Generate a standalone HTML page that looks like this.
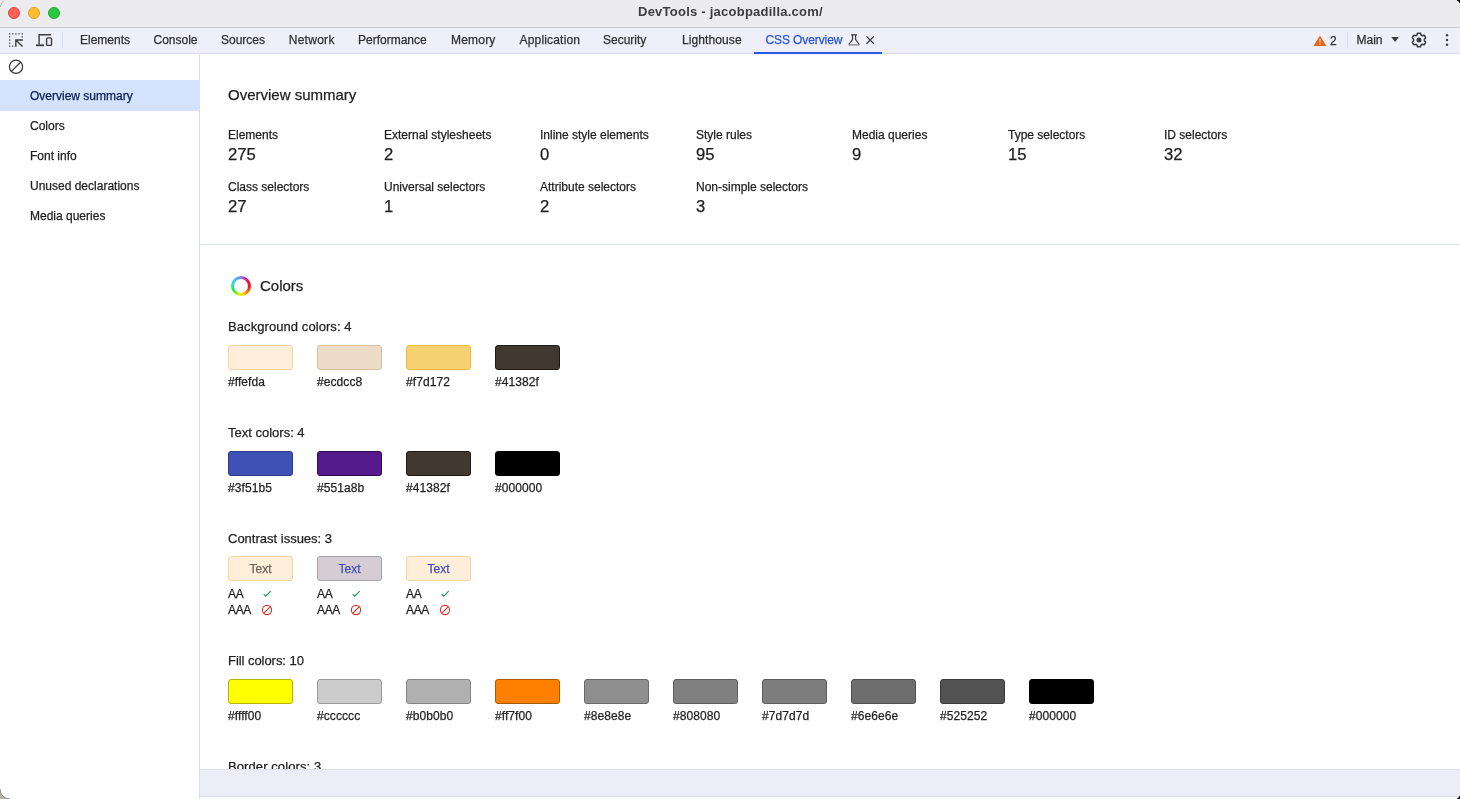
<!DOCTYPE html>
<html><head><meta charset="utf-8">
<style>
*{box-sizing:border-box;margin:0;padding:0}
html,body{width:1460px;height:799px;overflow:hidden;background:#fff}
body{font-family:"Liberation Sans",sans-serif;font-size:12px;color:#1f1f1f;position:relative;-webkit-text-stroke:.25px currentColor}
.abs{position:absolute}
#titlebar{left:0;top:0;width:1460px;height:27px;background:#ececee}
#titleline{left:0;top:27px;width:1460px;height:1px;background:#c9c9cc}
.tl{position:absolute;top:7px;width:12px;height:12px;border-radius:50%}
#title{-webkit-text-stroke:0;left:638px;top:4px;line-height:16px;font-weight:bold;font-size:13px;color:#3d3d3f;letter-spacing:.24px;white-space:nowrap}
#tabbar{left:0;top:28px;width:1460px;height:25px;background:#eeeff8}
#tabline{left:0;top:53px;width:1460px;height:1px;background:#d9dcf5}
.tab{position:absolute;top:33px;font-size:12px;color:#303034;white-space:nowrap;line-height:14px}
#sidebar{left:0;top:54px;width:199px;height:745px;background:#fff}
#sideline{left:199px;top:54px;width:1px;height:745px;background:#dcdcf4}
.sitem{position:absolute;left:30px;font-size:12px;line-height:14px;white-space:nowrap;color:#1f1f1f}
#sel{left:0;top:80px;width:200px;height:31px;background:#d3e3fd}
.h{position:absolute;left:228px;font-size:15px;line-height:18px;color:#1f1f1f;white-space:nowrap}
.lbl{position:absolute;font-size:12px;line-height:14px;white-space:nowrap}
.num{position:absolute;font-size:16px;line-height:18px;white-space:nowrap;transform:scaleX(1.04);transform-origin:0 0}
.sub{position:absolute;left:228px;font-size:13px;line-height:15px;white-space:nowrap;margin-top:-1px}
.sw{position:absolute;width:65px;height:25px;border-radius:3px;border:1px solid #000}
.hex{position:absolute;font-size:12px;line-height:14px;white-space:nowrap;letter-spacing:.08px}
#hr1{left:200px;top:244px;width:1260px;height:1px;background:#dfe4f3}
#bot{left:200px;top:769px;width:1260px;height:28px;background:#ededf7;border-top:1px solid #dcdff0;border-bottom:1px solid #dcdff0}
</style></head><body><div id="root" style="position:absolute;left:0;top:0;width:1460px;height:799px;will-change:transform">
<div class="abs" id="titlebar"></div>
<div class="abs" id="titleline"></div>
<div class="tl" style="left:8px;background:#fe5f57;border:0.5px solid #e14640"></div>
<div class="tl" style="left:28px;background:#febc2e;border:0.5px solid #dfa023"></div>
<div class="tl" style="left:48px;background:#28c840;border:0.5px solid #1dad2b"></div>
<div class="abs" id="title">DevTools - jacobpadilla.com/</div>
<div class="abs" id="tabbar"></div>
<div class="abs" id="tabline"></div>

<div class="tab" style="left:80px">Elements</div>
<div class="tab" style="left:153.5px">Console</div>
<div class="tab" style="left:221px">Sources</div>
<div class="tab" style="left:288.7px;letter-spacing:.28px">Network</div>
<div class="tab" style="left:358px">Performance</div>
<div class="tab" style="left:451px;letter-spacing:.2px">Memory</div>
<div class="tab" style="left:519.5px;letter-spacing:.18px">Application</div>
<div class="tab" style="left:603px">Security</div>
<div class="tab" style="left:682px;letter-spacing:.1px">Lighthouse</div>
<div class="tab" style="left:765.5px;color:#2a57d4;letter-spacing:-.1px">CSS Overview</div>
<div class="abs" style="left:754px;top:52px;width:128px;height:2px;background:#2b59e6;z-index:2"></div>
<div class="tab" style="left:1330px;top:33.7px">2</div>
<div class="tab" style="left:1356.5px">Main</div>

<div class="abs" id="sidebar"></div>

<svg class="abs" style="left:0;top:28px" width="1460" height="50" viewBox="0 28 1460 50">
<g fill="#3b3b40">
<!-- inspect dots -->
<rect x="9" y="33.2" width="1.3" height="1.3"/><rect x="12.1" y="33.2" width="1.3" height="1.3"/><rect x="15.2" y="33.2" width="1.3" height="1.3"/><rect x="18.4" y="33.2" width="1.3" height="1.3"/><rect x="21.6" y="33.2" width="1.3" height="1.3"/>
<rect x="9" y="36.2" width="1.3" height="1.3"/><rect x="9" y="39.4" width="1.3" height="1.3"/><rect x="9" y="42.5" width="1.3" height="1.3"/><rect x="9" y="45.5" width="1.3" height="1.3"/>
<rect x="21.6" y="36.2" width="1.3" height="1.3"/><rect x="12.1" y="45.5" width="1.3" height="1.3"/>
</g>
<g fill="none" stroke="#3b3b40" stroke-width="1.4">
<path d="M22.9 40 H15.8 V46.8 M16 40.2 L22.6 46.6"/>
<!-- device -->
<path d="M51 34.8 H39.1 V44.6" />
<path d="M36 45.3 H44" stroke-width="1.8"/>
<rect x="46.6" y="37.9" width="4.9" height="7.5" rx="1" />
<!-- clear -->
<circle cx="16" cy="66.8" r="6.6" stroke-width="1.3"/><path d="M11.4 71.4 L20.6 62.2" stroke-width="1.3"/>
<!-- flask -->
<path d="M851.1 34.9 H857 M852.5 35 V39.6 L848.8 44.5 M855.6 35 V39.6 L859.3 44.5" stroke-width="1.2"/>
<path d="M848.6 44.9 H859.5" stroke-width="1.2" stroke="#77777c"/>
<!-- x -->
<path d="M866.5 36.4 L873.8 43.7 M873.8 36.4 L866.5 43.7" stroke-width="1.3"/>
<!-- gear -->
<path d="M1421.02 34.99 L1420.57 33.18 L1417.43 33.18 L1416.98 34.99 L1415.68 35.74 L1413.88 35.23 L1412.31 37.95 L1413.65 39.25 L1413.65 40.75 L1412.31 42.05 L1413.88 44.77 L1415.68 44.26 L1416.98 45.01 L1417.43 46.82 L1420.57 46.82 L1421.02 45.01 L1422.32 44.26 L1424.12 44.77 L1425.69 42.05 L1424.35 40.75 L1424.35 39.25 L1425.69 37.95 L1424.12 35.23 L1422.32 35.74Z" stroke-width="1.5" stroke-linejoin="round"/>
</g>
<circle cx="1419" cy="40" r="2.5" fill="#3b3b40"/>
<circle cx="1447" cy="35.3" r="1.2" fill="#3b3b40"/><circle cx="1447" cy="40" r="1.2" fill="#3b3b40"/><circle cx="1447" cy="44.7" r="1.2" fill="#3b3b40"/>
<path d="M1391.3 36.9 H1398.8 L1395.05 42.1 Z" fill="#3b3b40"/>
<path d="M1319.9 35.6 L1326.3 46 H1313.6 Z" fill="#e8631e"/>
<rect x="1319.3" y="38.6" width="1.3" height="4" fill="#ffc49a"/><rect x="1319.3" y="43.4" width="1.3" height="1.3" fill="#ffc49a"/>
<rect x="62" y="32" width="1" height="16" fill="#d6ddf3"/>
<rect x="1347" y="32" width="1" height="16" fill="#d6ddf3"/>
</svg>

<div class="abs" id="sideline"></div>
<div class="abs" id="sel"></div>
<div class="sitem" style="top:89px;color:#0b1e52">Overview summary</div>
<div class="sitem" style="top:119px">Colors</div>
<div class="sitem" style="top:149px">Font info</div>
<div class="sitem" style="top:179px">Unused declarations</div>
<div class="sitem" style="top:209px">Media queries</div>

<div class="h" style="top:86px">Overview summary</div>
<div class="abs" id="hr1"></div>
<div class="lbl" style="left:228px;top:128px">Elements</div><div class="num" style="left:228px;top:145.5px">275</div>
<div class="lbl" style="left:384px;top:128px">External stylesheets</div><div class="num" style="left:384px;top:145.5px">2</div>
<div class="lbl" style="left:540px;top:128px">Inline style elements</div><div class="num" style="left:540px;top:145.5px">0</div>
<div class="lbl" style="left:696px;top:128px">Style rules</div><div class="num" style="left:696px;top:145.5px">95</div>
<div class="lbl" style="left:852px;top:128px">Media queries</div><div class="num" style="left:852px;top:145.5px">9</div>
<div class="lbl" style="left:1008px;top:128px">Type selectors</div><div class="num" style="left:1008px;top:145.5px">15</div>
<div class="lbl" style="left:1164px;top:128px">ID selectors</div><div class="num" style="left:1164px;top:145.5px">32</div>
<div class="lbl" style="left:228px;top:180px">Class selectors</div><div class="num" style="left:228px;top:197.5px">27</div>
<div class="lbl" style="left:384px;top:180px">Universal selectors</div><div class="num" style="left:384px;top:197.5px">1</div>
<div class="lbl" style="left:540px;top:180px">Attribute selectors</div><div class="num" style="left:540px;top:197.5px">2</div>
<div class="lbl" style="left:696px;top:180px">Non-simple selectors</div><div class="num" style="left:696px;top:197.5px">3</div>
<div class="abs" id="ring" style="left:231px;top:276px;width:20px;height:20px;border-radius:50%;background:conic-gradient(from 0deg,#8c7ce8 0deg,#c8309a 30deg,#e8104e 55deg,#ff1414 95deg,#ff6a00 130deg,#ffd000 165deg,#f0f000 185deg,#7cf01e 215deg,#2aea50 245deg,#22e8a8 275deg,#38d0e8 305deg,#58a8f4 335deg,#8c7ce8 360deg)"></div><div class="abs" style="left:234px;top:279px;width:14px;height:14px;border-radius:50%;background:#fff"></div>
<div class="h" style="left:260px;top:277px">Colors</div>
<div class="sub" style="top:320px;letter-spacing:.075px">Background colors: 4</div>
<div class="sw" style="left:228px;top:345px;background:#ffefda;border-color:#f8d3a2"></div><div class="hex" style="left:228px;top:375px">#ffefda</div>
<div class="sw" style="left:317px;top:345px;background:#ecdcc8;border-color:#d9bd9c"></div><div class="hex" style="left:317px;top:375px">#ecdcc8</div>
<div class="sw" style="left:406px;top:345px;background:#f7d172;border-color:#eebc44"></div><div class="hex" style="left:406px;top:375px">#f7d172</div>
<div class="sw" style="left:495px;top:345px;background:#41382f;border-color:#1d1813"></div><div class="hex" style="left:495px;top:375px">#41382f</div>
<div class="sub" style="top:426px">Text colors: 4</div>
<div class="sw" style="left:228px;top:451px;background:#3f51b5;border-color:#2c3a86"></div><div class="hex" style="left:228px;top:481px">#3f51b5</div>
<div class="sw" style="left:317px;top:451px;background:#551a8b;border-color:#2e0a50"></div><div class="hex" style="left:317px;top:481px">#551a8b</div>
<div class="sw" style="left:406px;top:451px;background:#41382f;border-color:#1d1813"></div><div class="hex" style="left:406px;top:481px">#41382f</div>
<div class="sw" style="left:495px;top:451px;background:#000000;border-color:#000000"></div><div class="hex" style="left:495px;top:481px">#000000</div>
<div class="sub" style="top:532px">Contrast issues: 3</div>
<div class="sw" style="left:228px;top:556px;background:#ffefda;border-color:#f8d3a2;color:#6b6259;font-size:12px;line-height:25px;text-align:center">Text</div>
<div class="hex" style="left:228px;top:587px;letter-spacing:-.3px">AA</div><div class="hex" style="left:228px;top:603px;letter-spacing:-.35px">AAA</div>
<svg class="abs" style="left:262px;top:589px" width="10" height="9" viewBox="0 0 10 9"><path d="M1.7 5.2 L3.7 7.1 L8.7 2.1" fill="none" stroke="#1a9855" stroke-width="1.15"/></svg>
<svg class="abs" style="left:261px;top:604px" width="12" height="12" viewBox="0 0 12 12"><circle cx="6" cy="6" r="4.6" fill="none" stroke="#d93025" stroke-width="1.1"/><path d="M2.8 9.2 L9.2 2.8" stroke="#d93025" stroke-width="1.1"/></svg>
<div class="sw" style="left:317px;top:556px;background:#d5cdd3;border-color:#a9a2a8;color:#3f51b5;font-size:12px;line-height:25px;text-align:center">Text</div>
<div class="hex" style="left:317px;top:587px;letter-spacing:-.3px">AA</div><div class="hex" style="left:317px;top:603px;letter-spacing:-.35px">AAA</div>
<svg class="abs" style="left:351px;top:589px" width="10" height="9" viewBox="0 0 10 9"><path d="M1.7 5.2 L3.7 7.1 L8.7 2.1" fill="none" stroke="#1a9855" stroke-width="1.15"/></svg>
<svg class="abs" style="left:350px;top:604px" width="12" height="12" viewBox="0 0 12 12"><circle cx="6" cy="6" r="4.6" fill="none" stroke="#d93025" stroke-width="1.1"/><path d="M2.8 9.2 L9.2 2.8" stroke="#d93025" stroke-width="1.1"/></svg>
<div class="sw" style="left:406px;top:556px;background:#ffefda;border-color:#f8d3a2;color:#3f51b5;font-size:12px;line-height:25px;text-align:center">Text</div>
<div class="hex" style="left:406px;top:587px;letter-spacing:-.3px">AA</div><div class="hex" style="left:406px;top:603px;letter-spacing:-.35px">AAA</div>
<svg class="abs" style="left:440px;top:589px" width="10" height="9" viewBox="0 0 10 9"><path d="M1.7 5.2 L3.7 7.1 L8.7 2.1" fill="none" stroke="#1a9855" stroke-width="1.15"/></svg>
<svg class="abs" style="left:439px;top:604px" width="12" height="12" viewBox="0 0 12 12"><circle cx="6" cy="6" r="4.6" fill="none" stroke="#d93025" stroke-width="1.1"/><path d="M2.8 9.2 L9.2 2.8" stroke="#d93025" stroke-width="1.1"/></svg>
<div class="sub" style="top:654px;letter-spacing:-.05px">Fill colors: 10</div>
<div class="sw" style="left:228px;top:679px;background:#ffff00;border-color:#b3b300"></div><div class="hex" style="left:228px;top:709px">#ffff00</div>
<div class="sw" style="left:317px;top:679px;background:#cccccc;border-color:#9a9a9a"></div><div class="hex" style="left:317px;top:709px">#cccccc</div>
<div class="sw" style="left:406px;top:679px;background:#b0b0b0;border-color:#858585"></div><div class="hex" style="left:406px;top:709px">#b0b0b0</div>
<div class="sw" style="left:495px;top:679px;background:#ff7f00;border-color:#b35900"></div><div class="hex" style="left:495px;top:709px">#ff7f00</div>
<div class="sw" style="left:584px;top:679px;background:#8e8e8e;border-color:#6a6a6a"></div><div class="hex" style="left:584px;top:709px">#8e8e8e</div>
<div class="sw" style="left:673px;top:679px;background:#808080;border-color:#5e5e5e"></div><div class="hex" style="left:673px;top:709px">#808080</div>
<div class="sw" style="left:762px;top:679px;background:#7d7d7d;border-color:#5c5c5c"></div><div class="hex" style="left:762px;top:709px">#7d7d7d</div>
<div class="sw" style="left:851px;top:679px;background:#6e6e6e;border-color:#505050"></div><div class="hex" style="left:851px;top:709px">#6e6e6e</div>
<div class="sw" style="left:940px;top:679px;background:#525252;border-color:#3a3a3a"></div><div class="hex" style="left:940px;top:709px">#525252</div>
<div class="sw" style="left:1029px;top:679px;background:#000000;border-color:#000000"></div><div class="hex" style="left:1029px;top:709px">#000000</div>
<div class="sub" style="top:760px;letter-spacing:.09px">Border colors: 3</div>
<div class="abs" id="bot"></div>
<svg class="abs" style="left:0;top:0" width="1460" height="799" viewBox="0 0 1460 799">
<path d="M0 789 L0 799 L10 799 A10 10 0 0 1 0 789 Z" fill="#b8b0a5"/>
<path d="M0 789 A10 10 0 0 0 10 799" fill="none" stroke="#8f8a86" stroke-width="1"/>
<path d="M1460 795.5 L1460 799 L1456.5 799 A10 10 0 0 0 1460 795.5 Z" fill="#05050f"/>
<path d="M1456.5 0 L1460 0 L1460 3.5 A10 10 0 0 0 1456.5 0 Z" fill="#05050f"/>
<path d="M0 7 A10 10 0 0 1 4.5 0" fill="none" stroke="#a9a9ad" stroke-width="1"/>
<path d="M0 0 L4 0 A10 10 0 0 0 0 6.5 Z" fill="#f3eded"/>
</svg>
</div></body></html>
